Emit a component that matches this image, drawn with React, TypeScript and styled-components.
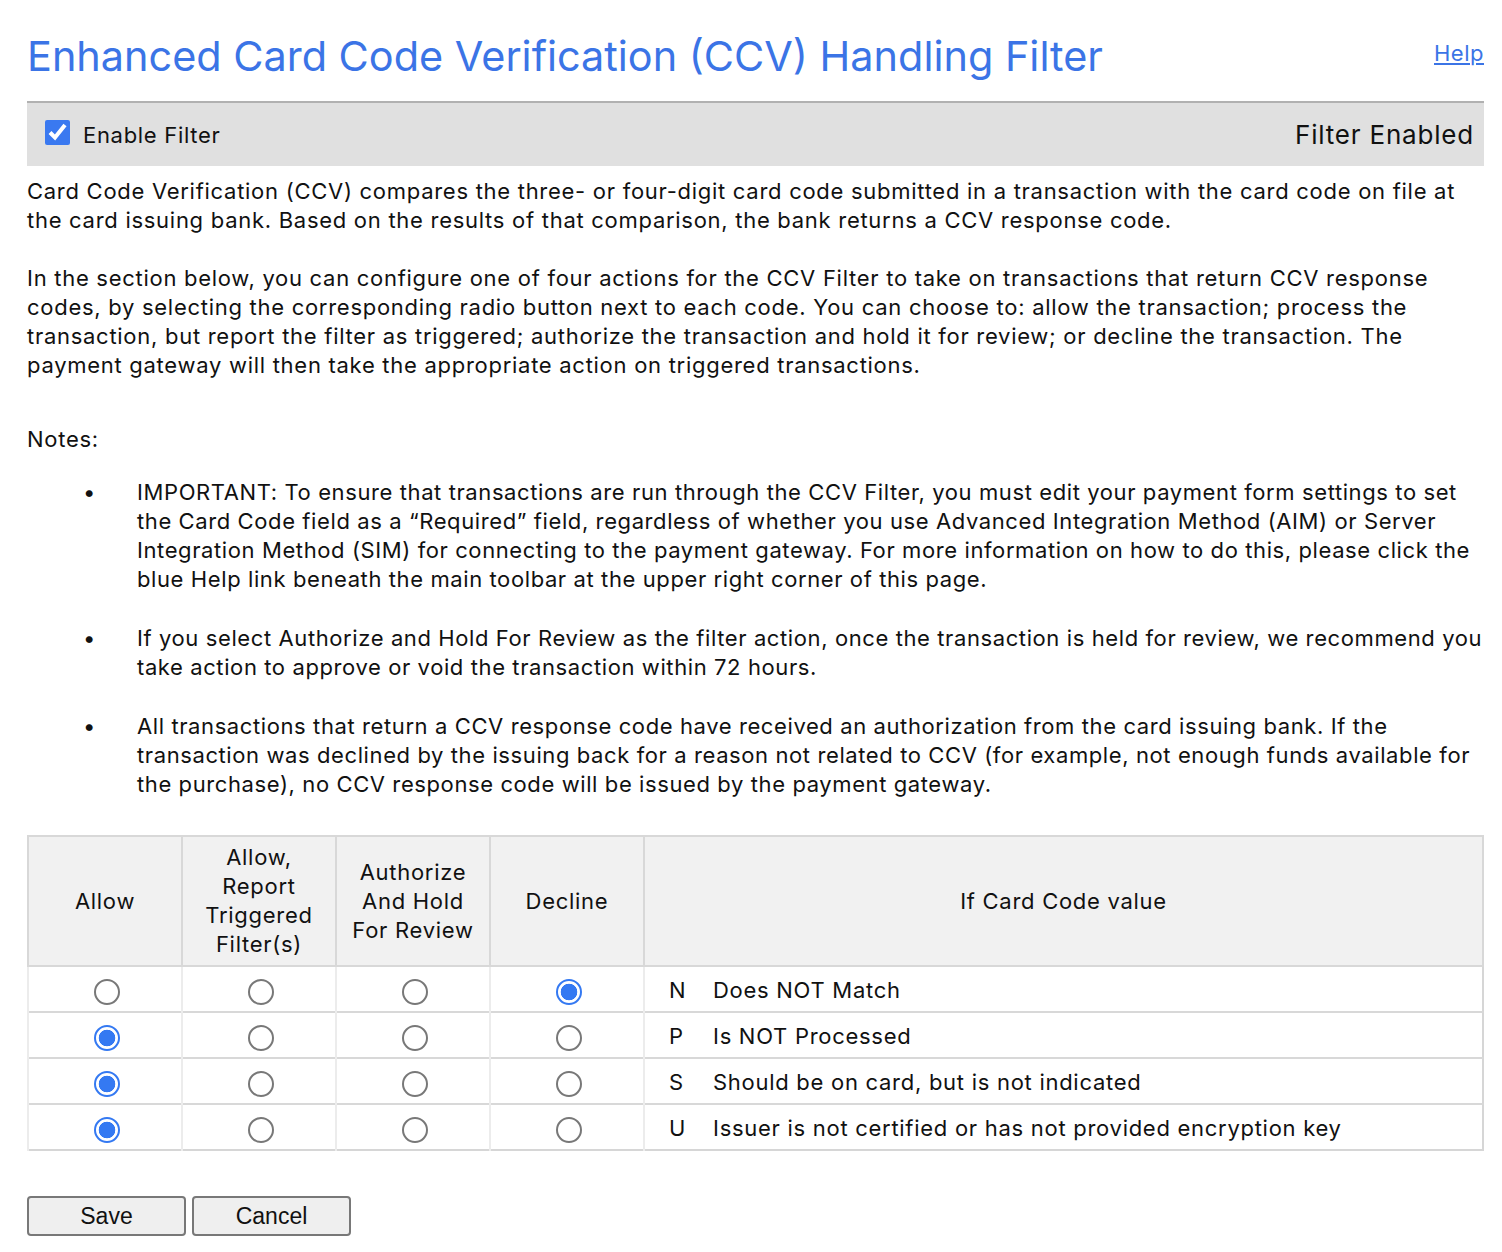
import React, { useState } from 'react';
import styled, { createGlobalStyle } from 'styled-components';

const GlobalStyle = createGlobalStyle`
  html, body {
    margin: 0;
    padding: 0;
    background: #ffffff;
  }
  body {
    font-family: Inter, 'Noto Sans', sans-serif;
    color: #111111;
  }
`;

const Page = styled.div`
  padding: 28px 18px 16px 27px;
`;

const TitleRow = styled.div`
  display: flex;
  justify-content: space-between;
  align-items: flex-start;
  margin-bottom: 17px;
`;

const Title = styled.h1`
  margin: 0;
  font-size: 41.4px;
  font-weight: 400;
  line-height: 56px;
  color: #3b74e6;
`;

const HelpLink = styled.a`
  font-size: 22px;
  letter-spacing: 0.5px;
  color: #3b74e6;
  text-decoration: underline;
  margin-top: 12px;
  cursor: pointer;
`;

const FilterBar = styled.div`
  display: flex;
  justify-content: space-between;
  align-items: center;
  height: 63px;
  border-top: 2px solid #b1b1b1;
  background: #e0e0e0;
  padding: 0 10px 0 18px;
`;

const CheckLabel = styled.label`
  display: flex;
  align-items: center;
  gap: 13px;
  font-size: 22px;
  letter-spacing: 0.7px;
`;

const CheckBox = styled.input`
  width: 25px;
  height: 25px;
  margin: 0 0 4px 0;
  accent-color: #3a79f0;
`;

const Status = styled.span`
  font-size: 26px;
  letter-spacing: 0.8px;
`;

const Body = styled.div`
  padding-top: 11px;
  font-size: 22px;
  line-height: 29px;
`;

const Text = styled.p<{ $gap?: number }>`
  margin: 0 0 ${(p) => p.$gap ?? 29}px 0;
  letter-spacing: 0.72px;
`;

const NoteList = styled.ul`
  margin: 24px 0 0 0;
  padding: 0 0 0 55px;
  list-style: none;
`;

const NoteItem = styled.li`
  display: grid;
  grid-template-columns: 55px 1fr;
  margin-bottom: 30px;
  letter-spacing: 0.6px;
  &::before {
    content: '•';
    font-size: 22px;
    padding-left: 1px;
  }
`;

const Grid = styled.table`
  width: 100%;
  table-layout: fixed;
  border-collapse: collapse;
  border: 2px solid #d6d6d6;
  margin-top: 36px;
  letter-spacing: 0.72px;
`;

const Col = styled.col<{ $wide?: boolean }>`
  width: ${(p) => (p.$wide ? 'auto' : '154px')};
`;

const HeadCell = styled.th`
  height: 128px;
  background: #f1f1f1;
  border: 2px solid #d8d8d8;
  font-weight: 400;
  font-size: 22px;
  line-height: 29px;
  text-align: center;
  padding: 0 4px;
`;

const Row = styled.tr`
  height: 46px;
  border-top: 2px solid #d8d8d8;
`;

const RadioCell = styled.td`
  text-align: center;
  border-left: 2px solid #ececec;
  border-right: 2px solid #ececec;
  padding: 0 0 0 4px;
  vertical-align: middle;
`;

const Radio = styled.input`
  appearance: none;
  box-sizing: border-box;
  width: 26px;
  height: 26px;
  margin: 6px 0 0 0;
  border: 2px solid #787878;
  border-radius: 50%;
  background: #fff;
  vertical-align: middle;
  &:checked {
    border-color: #3479f2;
    background: radial-gradient(circle, #3479f2 0 8px, #ffffff 8.6px);
  }
`;

const CodeCell = styled.td`
  font-size: 22px;
  padding: 2px 0 0 24px;
  vertical-align: middle;
`;

const Code = styled.span`
  display: inline-block;
  width: 44px;
`;

const Actions = styled.div`
  display: flex;
  gap: 6px;
  margin-top: 45px;
`;

const Button = styled.button`
  width: 159px;
  height: 40px;
  border: 2px solid #787878;
  border-radius: 4px;
  background: #efefef;
  font-family: 'Liberation Sans', Arial, sans-serif;
  font-size: 23px;
  color: #111;
  padding: 0;
`;

const codes = [
  { code: 'N', label: 'Does NOT Match', value: 3 },
  { code: 'P', label: 'Is NOT Processed', value: 0 },
  { code: 'S', label: 'Should be on card, but is not indicated', value: 0 },
  { code: 'U', label: 'Issuer is not certified or has not provided encryption key', value: 0 },
];

const App = () => {
  const [enabled, setEnabled] = useState(true);
  const [choices, setChoices] = useState<number[]>(codes.map((c) => c.value));

  const pick = (row: number, col: number) => {
    setChoices((prev) => prev.map((v, i) => (i === row ? col : v)));
  };

  return (
    <>
      <GlobalStyle />
      <Page>
        <TitleRow>
          <Title>Enhanced Card Code Verification (CCV) Handling Filter</Title>
          <HelpLink>Help</HelpLink>
        </TitleRow>

        <FilterBar>
          <CheckLabel>
            <CheckBox type='checkbox' checked={enabled} onChange={() => setEnabled(!enabled)} />
            Enable Filter
          </CheckLabel>
          <Status>{enabled ? 'Filter Enabled' : 'Filter Disabled'}</Status>
        </FilterBar>

        <Body>
          <Text>
            Card Code Verification (CCV) compares the three- or four-digit card code submitted in a transaction with the card code on file at the card issuing bank. Based on the results of that comparison, the bank returns a CCV response code.
          </Text>
          <Text $gap={45}>
            In the section below, you can configure one of four actions for the CCV Filter to take on transactions that return CCV response codes, by selecting the corresponding radio button next to each code. You can choose to: allow the transaction; process the transaction, but report the filter as triggered; authorize the transaction and hold it for review; or decline the transaction. The payment gateway will then take the appropriate action on triggered transactions.
          </Text>
          <Text $gap={0}>Notes:</Text>

          <NoteList>
            <NoteItem>
              <span>
                IMPORTANT: To ensure that transactions are run through the CCV Filter, you must edit your payment form settings to set the Card Code field as a “Required” field, regardless of whether you use Advanced Integration Method (AIM) or Server Integration Method (SIM) for connecting to the payment gateway. For more information on how to do this, please click the blue Help link beneath the main toolbar at the upper right corner of this page.
              </span>
            </NoteItem>
            <NoteItem>
              <span>
                If you select Authorize and Hold For Review as the filter action, once the transaction is held for review, we recommend you take action to approve or void the transaction within 72 hours.
              </span>
            </NoteItem>
            <NoteItem>
              <span>
                All transactions that return a CCV response code have received an authorization from the card issuing bank. If the transaction was declined by the issuing back for a reason not related to CCV (for example, not enough funds available for the purchase), no CCV response code will be issued by the payment gateway.
              </span>
            </NoteItem>
          </NoteList>
        </Body>

        <Grid>
          <colgroup>
            <Col />
            <Col />
            <Col />
            <Col />
            <Col $wide />
          </colgroup>
          <thead>
            <tr>
              <HeadCell>Allow</HeadCell>
              <HeadCell>
                Allow,
                <br />
                Report
                <br />
                Triggered
                <br />
                Filter(s)
              </HeadCell>
              <HeadCell>
                Authorize
                <br />
                And Hold
                <br />
                For Review
              </HeadCell>
              <HeadCell>Decline</HeadCell>
              <HeadCell>If Card Code value</HeadCell>
            </tr>
          </thead>
          <tbody>
            {codes.map((c, row) => (
              <Row key={c.code}>
                {[0, 1, 2, 3].map((col) => (
                  <RadioCell key={col}>
                    <Radio
                      type='radio'
                      name={`ccv-${c.code}`}
                      checked={choices[row] === col}
                      onChange={() => pick(row, col)}
                    />
                  </RadioCell>
                ))}
                <CodeCell>
                  <Code>{c.code}</Code>
                  {c.label}
                </CodeCell>
              </Row>
            ))}
          </tbody>
        </Grid>

        <Actions>
          <Button type='button'>Save</Button>
          <Button type='button'>Cancel</Button>
        </Actions>
      </Page>
    </>
  );
};

export default App;
